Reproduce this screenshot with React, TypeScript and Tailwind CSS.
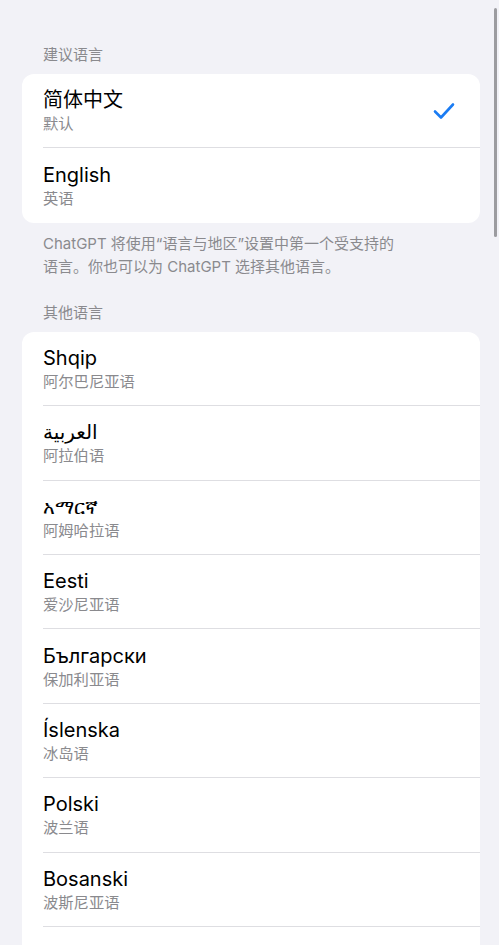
import React from 'react';

const suggested = [
  { title: '简体中文', sub: '默认', checked: true },
  { title: 'English', sub: '英语', checked: false },
];

const others = [
  { title: 'Shqip', sub: '阿尔巴尼亚语' },
  { title: 'العربية', sub: '阿拉伯语' },
  { title: 'አማርኛ', sub: '阿姆哈拉语' },
  { title: 'Eesti', sub: '爱沙尼亚语' },
  { title: 'Български', sub: '保加利亚语' },
  { title: 'Íslenska', sub: '冰岛语' },
  { title: 'Polski', sub: '波兰语' },
  { title: 'Bosanski', sub: '波斯尼亚语' },
  { title: 'Dansk', sub: '丹麦语' },
];

const font = { fontFamily: 'Inter, "Noto Sans CJK SC", "Noto Sans", "DejaVu Sans", sans-serif' };

function Check() {
  return (
    <svg width="22" height="18" viewBox="0 0 22 18" fill="none">
      <path d="M2 9.5 L8 15.5 L20 2.5" stroke="#1b7cf3" strokeWidth="2.6" strokeLinecap="round" strokeLinejoin="round" />
    </svg>
  );
}

function Row({ title, sub, checked, last }: { title: string; sub: string; checked?: boolean; last?: boolean }) {
  return (
    <div className="flex h-[74.4px] pl-[21px]">
      <div className={`flex flex-1 items-center pr-[25px] ${last ? '' : 'border-b border-[#dedee2]'}`}>
        <div className="flex flex-1 flex-col pt-[1px]">
          <div className="text-[20px] leading-[24px] text-black">{title}</div>
          <div className="mt-[2px] text-[15.3px] leading-[20px] text-[#8a8a8e]">{sub}</div>
        </div>
        {checked && <Check />}
      </div>
    </div>
  );
}

function Header({ children }: { children: React.ReactNode }) {
  return <div className="px-[43px] pb-[9px] text-[15px] leading-[20px] text-[#8a8a8e]">{children}</div>;
}

export default function App() {
  return (
    <div className="relative h-[945px] w-full overflow-hidden bg-[#f2f2f7]" style={font}>
      <div className="pt-[45px]">
        <Header>建议语言</Header>
        <div className="ml-[22px] mr-[19px] overflow-hidden rounded-[12px] bg-white">
          {suggested.map((r, i) => (
            <Row key={r.title} {...r} last={i === suggested.length - 1} />
          ))}
        </div>
        <div className="px-[43px] pt-[9px] text-[15px] leading-[23px] text-[#8a8a8e]">
          ChatGPT 将使用“语言与地区”设置中第一个受支持的
          <br />
          语言。你也可以为 ChatGPT 选择其他语言。
        </div>
        <div className="pt-[25px]">
          <Header>其他语言</Header>
        </div>
        <div className="ml-[22px] mr-[19px] overflow-hidden rounded-[12px] bg-white">
          {others.map((r) => (
            <Row key={r.title} {...r} />
          ))}
        </div>
      </div>
      {/* scroll indicator */}
      <div className="absolute right-[2px] top-[8px] h-[229px] w-[3px] rounded-full bg-[#9c9ca0]" />
    </div>
  );
}
